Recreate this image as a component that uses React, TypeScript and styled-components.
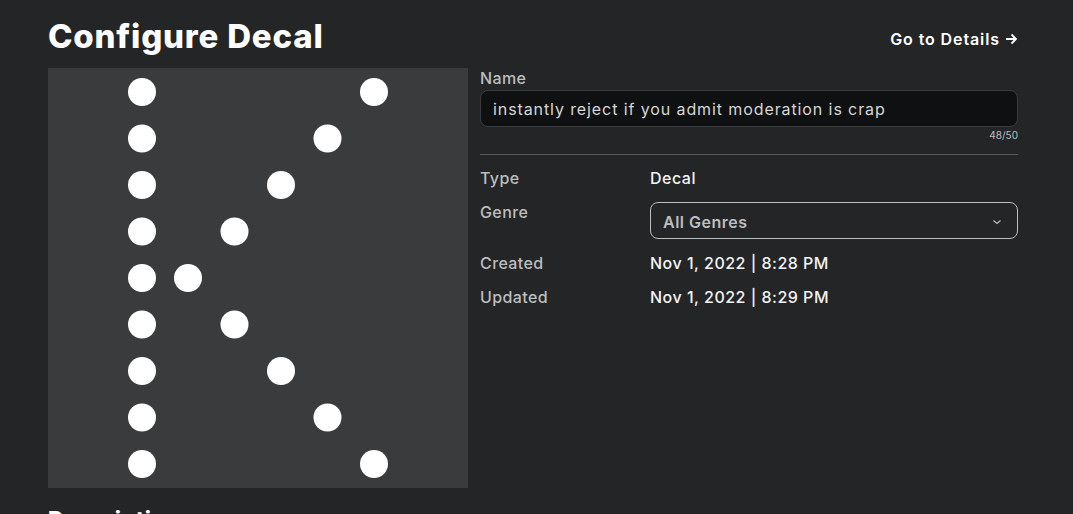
import { FC, Fragment } from "react";
import styled, { createGlobalStyle } from "styled-components";

const GlobalStyle = createGlobalStyle`
  html, body {
    margin: 0;
    background: #232527;
    overflow: hidden;
  }
  body {
    font-family: "Inter", "Noto Sans", "Liberation Sans", sans-serif;
    color: #ffffff;
  }
`;

const Page = styled.div`
  width: 1073px;
  height: 514px;
  box-sizing: border-box;
  padding: 14px 55px 0 48px;
`;

const Header = styled.div`
  display: flex;
  justify-content: space-between;
  align-items: center;
  height: 44px;
  margin-bottom: 10px;
`;

const Title = styled.h1`
  margin: 0;
  font-size: 33px;
  font-weight: 800;
  letter-spacing: 0.8px;
  color: #ffffff;
`;

const DetailsLink = styled.a`
  display: flex;
  align-items: center;
  gap: 4px;
  margin-top: 6px;
  font-size: 16px;
  font-weight: 600;
  letter-spacing: 0.9px;
  color: #ffffff;
  text-decoration: none;
`;

const Body = styled.div`
  display: flex;
  gap: 12px;
`;

const Preview = styled.div`
  width: 420px;
  height: 420px;
  flex-shrink: 0;
  background: #393b3d;
`;

const Form = styled.div`
  flex: 1;
  display: flex;
  flex-direction: column;
`;

const Label = styled.div`
  font-size: 16px;
  font-weight: 500;
  letter-spacing: 0.4px;
  color: #bdbebe;
  line-height: 20px;
`;

const NameInput = styled.div`
  margin-top: 2px;
  height: 37px;
  box-sizing: border-box;
  border: 1px solid #393b3d;
  border-radius: 8px;
  background: #0f1011;
  padding: 0 12px;
  display: flex;
  align-items: center;
  font-size: 16px;
  color: #d6d6d6;
  letter-spacing: 0.9px;
`;

const Counter = styled.div`
  text-align: right;
  font-size: 10px;
  color: #bdbebe;
  margin-top: 2px;
  line-height: 12px;
`;

const Divider = styled.hr`
  margin: 13px 0 13px;
  border: 0;
  border-top: 1px solid #55575a;
`;

const InfoGrid = styled.div`
  display: grid;
  grid-template-columns: 170px 1fr;
  row-gap: 14px;
  align-items: start;
`;

const Value = styled.div`
  font-size: 16px;
  font-weight: 500;
  letter-spacing: 0.5px;
  color: #f4f4f4;
  line-height: 20px;
`;

const Select = styled.div`
  height: 37px;
  box-sizing: border-box;
  border: 1px solid #bdbebe;
  border-radius: 8px;
  padding: 2px 14px 0 12px;
  display: flex;
  align-items: center;
  justify-content: space-between;
  font-size: 16px;
  font-weight: 600;
  letter-spacing: 0.5px;
  color: #bdbebe;
`;

const SectionTitle = styled.h2`
  margin: 18px 0 0;
  font-size: 22px;
  font-weight: 800;
  letter-spacing: 0.5px;
  color: #ffffff;
`;

// the "K" decal: a straight column of dots plus a chevron meeting it in the middle
const dots: [number, number][] = [];
for (let i = 0; i < 9; i++) {
  const y = 24 + i * 46.5;
  dots.push([94, y]);
  dots.push([140 + Math.abs(4 - i) * 46.5, y]);
}

const Decal: FC = () => (
  <svg width="420" height="420" viewBox="0 0 420 420">
    {dots.map(([cx, cy], i) => (
      <circle key={i} cx={cx} cy={cy} r="14" fill="#ffffff" />
    ))}
  </svg>
);

const Chevron: FC = () => (
  <svg width="12" height="12" viewBox="0 0 12 12">
    <path d="M2.5 4.5 L6 7.5 L9.5 4.5" fill="none" stroke="#bdbebe" strokeWidth="1.2" />
  </svg>
);

const Arrow: FC = () => (
  <svg width="14" height="14" viewBox="0 0 14 14">
    <path d="M2 7 H12 M7.5 2.5 L12 7 L7.5 11.5" fill="none" stroke="#ffffff" strokeWidth="1.8" />
  </svg>
);

const details = [
  { label: "Created", value: "Nov 1, 2022 | 8:28 PM" },
  { label: "Updated", value: "Nov 1, 2022 | 8:29 PM" },
];

export default function App() {
  return (
    <>
      <GlobalStyle />
      <Page>
        <Header>
          <Title>Configure Decal</Title>
          <DetailsLink href="#">
            Go to Details <Arrow />
          </DetailsLink>
        </Header>
        <Body>
          <Preview>
            <Decal />
          </Preview>
          <Form>
            <Label>Name</Label>
            <NameInput>instantly reject if you admit moderation is crap</NameInput>
            <Counter>48/50</Counter>
            <Divider />
            <InfoGrid>
              <Label>Type</Label>
              <Value>Decal</Value>
              <Label>Genre</Label>
              <Select>
                All Genres <Chevron />
              </Select>
              {details.map(({ label, value }) => (
                <Fragment key={label}>
                  <Label>{label}</Label>
                  <Value>{value}</Value>
                </Fragment>
              ))}
            </InfoGrid>
          </Form>
        </Body>
        <SectionTitle>Description</SectionTitle>
      </Page>
    </>
  );
}
